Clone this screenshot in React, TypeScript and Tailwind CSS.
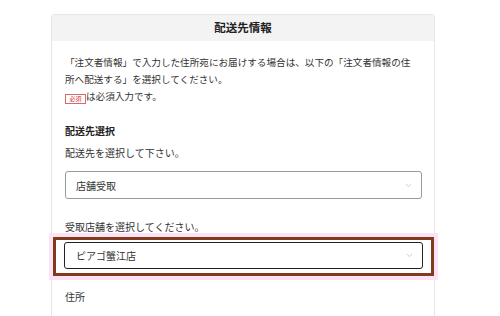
import { ChevronDown } from "lucide-react";

const font = { fontFamily: '"Noto Sans CJK JP", "Noto Sans", sans-serif' };

function SelectBox({ value, active }: { value: string; active?: boolean }) {
  return (
    <div
      className={
        active
          ? "flex h-[27px] items-center justify-between rounded-[3px] border-[1.5px] border-[#222] bg-white pl-[11px] pr-[8px]"
          : "flex h-[28px] items-center justify-between rounded-[3px] border border-[#9a9a9a] bg-white pl-[10px] pr-[8px]"
      }
    >
      <span className="text-[10px] text-[#333]">{value}</span>
      <ChevronDown className="h-[9px] w-[9px] text-[#aaa]" strokeWidth={1.5} />
    </div>
  );
}

export default function App() {
  return (
    <div className="h-[316px] w-[500px] overflow-hidden bg-white pt-[14px]" style={font}>
      <div className="ml-[51px] h-[310px] w-[384px] rounded-t-[3px] border border-[#e6e6e6]">
        {/* header */}
        <div className="flex h-[26px] items-center justify-center bg-[#f3f3f3]">
          <h2 className="text-[11.5px] font-bold text-[#222]">配送先情報</h2>
        </div>

        <div className="pl-[13px] pr-[12px] pt-[13px] text-[#333]">
          <p className="whitespace-nowrap text-[9.6px] leading-[17px]">
            「注文者情報」で入力した住所宛にお届けする場合は、以下の「注文者情報の住
            <br />
            所へ配送する」を選択してください。
            <br />
            <span className="inline-flex h-[10px] w-[21px] items-center justify-center border border-[#d66a6a] align-[-1px] text-[6px] leading-none text-[#c83232]">
              必須
            </span>
            は必須入力です。
          </p>

          <h3 className="mt-[17px] text-[10px] font-bold leading-[17px] text-[#222]">配送先選択</h3>
          <p className="mt-[5px] text-[10px] leading-[17px]">配送先を選択して下さい。</p>
          <div className="mt-[10px]">
            <SelectBox value="店舗受取" />
          </div>

          <p className="mt-[19px] text-[10px] leading-[17px]">受取店舗を選択してください。</p>
          <div className="-mx-[12px] mt-[1.5px] border-[3px] border-[#823a1e] px-[8px] pb-[4px] pt-[2px] shadow-[0_0_0_4px_#fbe2f4]">
            <SelectBox value="ピアゴ蟹江店" active />
          </div>

          <p className="mt-[12px] text-[10px] leading-[17px]">住所</p>
        </div>
      </div>
    </div>
  );
}
